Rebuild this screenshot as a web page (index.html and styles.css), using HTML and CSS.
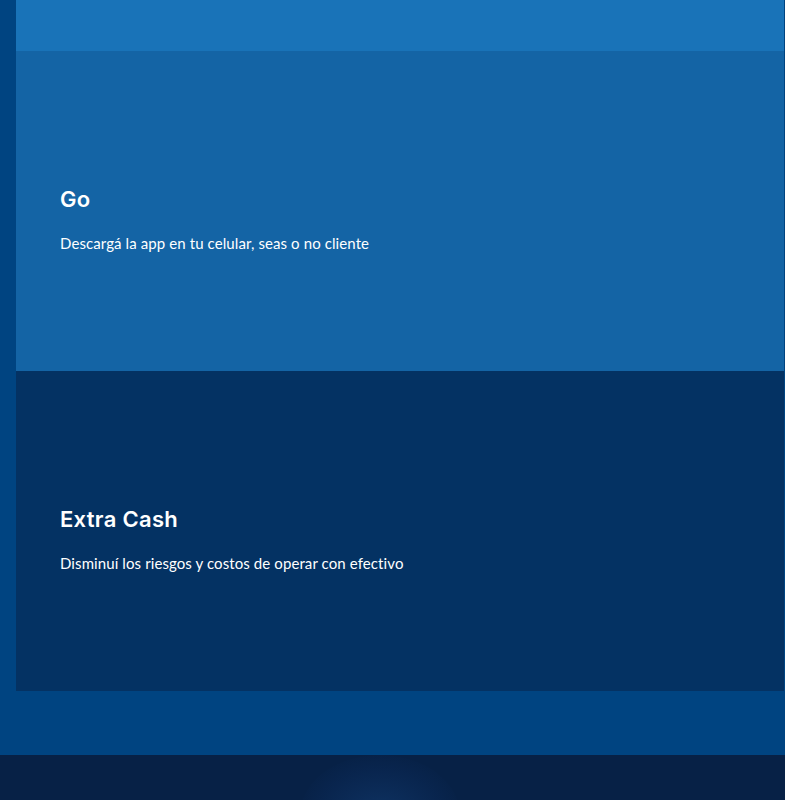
FILE: index.html
```html
<!DOCTYPE html>
<html lang="es">
<head>
<meta charset="utf-8">
<title>BBVA</title>
<link rel="stylesheet" href="styles.css">
</head>
<body>
<div class="page">
  <div class="cards">
    <div class="card card-top"></div>
    <div class="card card-go">
      <h3 class="card-title">Go</h3>
      <p class="card-text">Descargá la app en tu celular, seas o no cliente</p>
    </div>
    <div class="card card-cash">
      <h3 class="card-title">Extra Cash</h3>
      <p class="card-text">Disminuí los riesgos y costos de operar con efectivo</p>
    </div>
  </div>
  <div class="spacer"></div>
  <footer class="footer"><div class="glow"></div></footer>
</div>
</body>
</html>
```
FILE: styles.css
```css
* { box-sizing: border-box; }
html, body { margin: 0; padding: 0; }
body {
  background: #004481;
  font-family: Lato, "Liberation Sans", sans-serif;
  color: #fff;
  width: 785px;
  height: 800px;
  overflow: hidden;
}
.page { display: flex; flex-direction: column; }
.cards {
  display: flex;
  flex-direction: column;
  margin-left: 16px;
  margin-right: 1px;
}
.card {
  display: flex;
  flex-direction: column;
  justify-content: center;
  padding: 17px 44px 0;
}
.card-top { height: 51px; background: #1973b8; padding: 0; }
.card-go { height: 320px; background: #1464a5; }
.card-cash { height: 320px; background: #043263; }
.card-title {
  margin: 0 0 19px;
  font-family: Inter, Lato, sans-serif;
  font-size: 22px;
  font-weight: 600;
  line-height: 28px;
  letter-spacing: 0.3px;
}
.card-text {
  margin: 0;
  font-size: 15px;
  line-height: 22px;
  font-weight: 400;
  letter-spacing: 0.1px;
}
.spacer { height: 64px; }
.footer {
  height: 45px;
  background: #072146;
  position: relative;
  overflow: hidden;
}
.glow {
  position: absolute;
  left: 300px;
  top: 0;
  width: 160px;
  height: 120px;
  border-radius: 50%;
  background: radial-gradient(ellipse at center, rgba(20,64,120,0.55) 0%, rgba(12,45,95,0.3) 55%, rgba(7,33,70,0) 75%);
}
```
